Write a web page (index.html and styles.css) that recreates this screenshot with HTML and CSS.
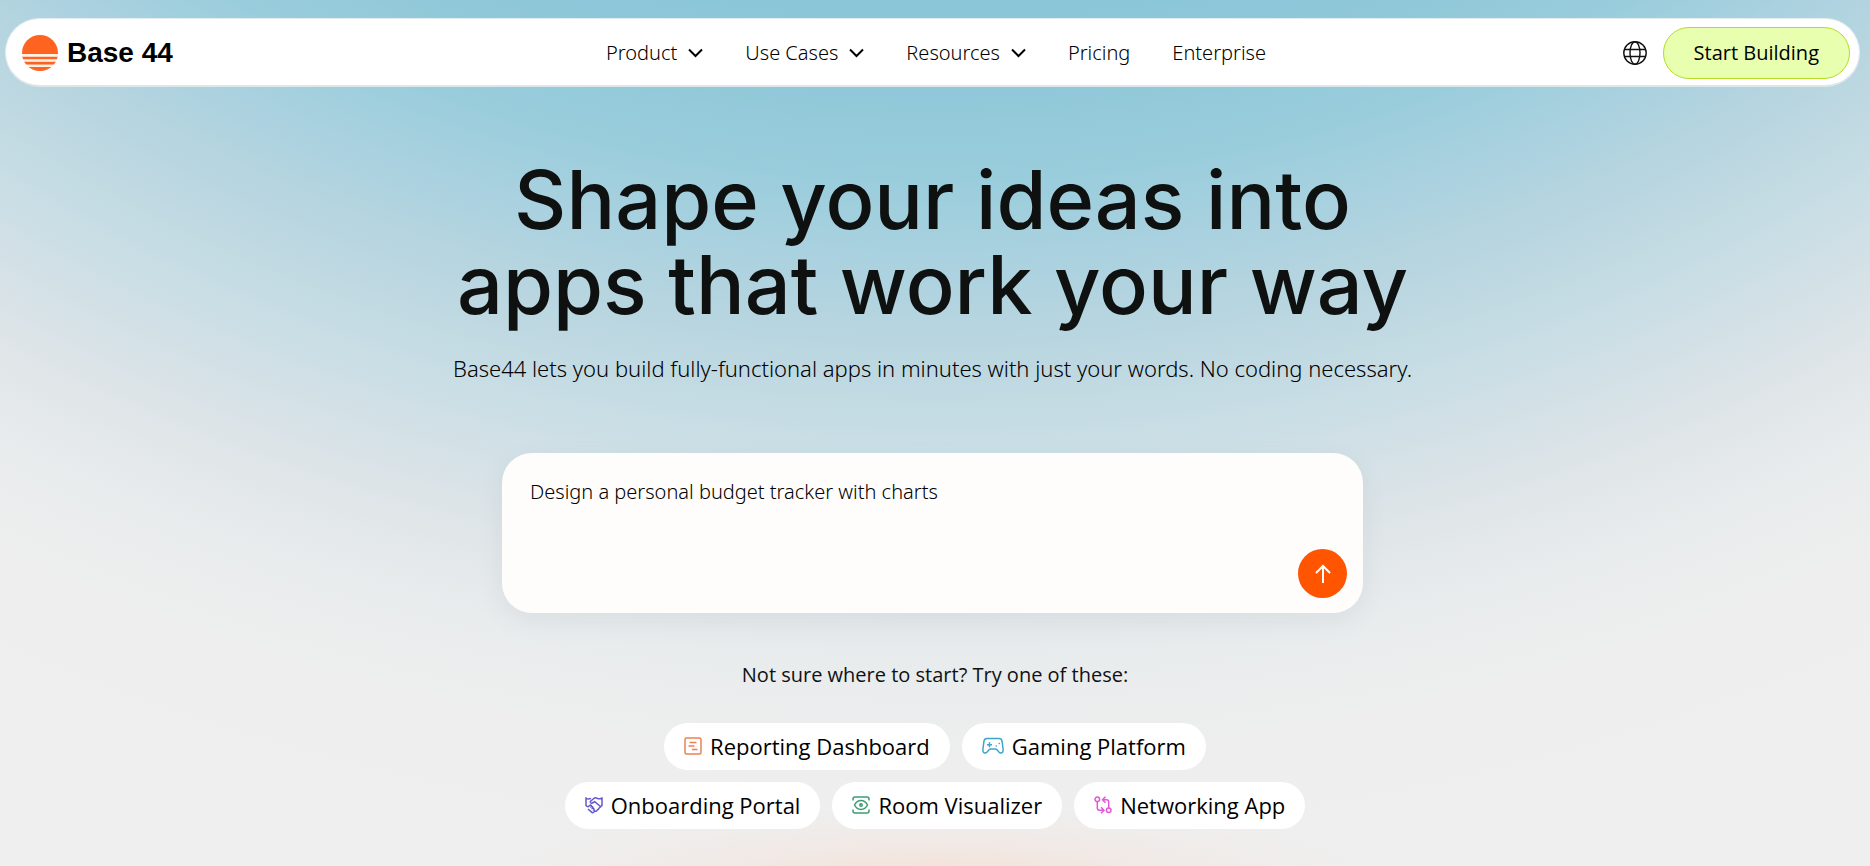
FILE: index.html
```html
<!DOCTYPE html>
<html lang="en">
<head>
<meta charset="utf-8">
<meta name="viewport" content="width=device-width, initial-scale=1">
<title>Base 44</title>
<link rel="stylesheet" href="styles.css">
</head>
<body>
<header class="navbar">
  <a class="brand" href="#">
    <svg class="brand-mark" viewBox="0 0 36 36" aria-hidden="true">
      <defs><clipPath id="sun"><circle cx="18" cy="18" r="18"/></clipPath></defs>
      <g clip-path="url(#sun)" fill="#ff6320">
        <path d="M0 0h36v19H0z"/>
        <path d="M0 21.5h36v3H0zM0 26.500h36v3.200H0zM0 32h36v4H0z"/>
        <path d="M0 19h36v2.500H0zM0 24.500h36v2H0zM0 29.700h36v2.300H0z" fill="#fff1e8"/>
      </g>
    </svg>
    <span>Base 44</span>
  </a>
  <nav class="links" aria-label="Main">
    <button class="link" type="button">Product <svg class="chevron" viewBox="0 0 15 10" aria-hidden="true"><path d="M1 1.500 7.500 8 14 1.500"/></svg></button>
    <button class="link" type="button">Use Cases <svg class="chevron" viewBox="0 0 15 10" aria-hidden="true"><path d="M1 1.500 7.500 8 14 1.500"/></svg></button>
    <button class="link" type="button">Resources <svg class="chevron" viewBox="0 0 15 10" aria-hidden="true"><path d="M1 1.500 7.500 8 14 1.500"/></svg></button>
    <a class="link" href="#">Pricing</a>
    <a class="link" href="#">Enterprise</a>
  </nav>
  <div class="actions">
    <button class="globe" type="button" aria-label="Language">
      <svg viewBox="0 0 24 24" aria-hidden="true"><circle cx="12" cy="12" r="11.200"/><ellipse cx="12" cy="12" rx="5" ry="11.200"/><path d="M1.800 8.500h20.400M1.800 15.500h20.400"/></svg>
    </button>
    <a class="cta" href="#">Start Building</a>
  </div>
</header>

<main>
  <section class="hero">
    <h1>Shape your ideas into<br>apps that work your way</h1>
    <p class="lead">Base44 lets you build fully-functional apps in minutes with just your words. No coding necessary.</p>
    <form class="prompt">
      <textarea class="prompt-text" aria-label="Describe your app" rows="2">Design a personal budget tracker with charts</textarea>
      <button class="send" type="button" aria-label="Send">
        <svg viewBox="0 0 18 20" aria-hidden="true"><path d="M9 19V2M2 9l7-7 7 7"/></svg>
      </button>
    </form>
  </section>

  <section class="suggestions">
    <p class="hint">Not sure where to start? Try one of these:</p>
    <div class="chips">
      <button class="chip" type="button">
        <svg class="icon orange" viewBox="0 0 18 18" aria-hidden="true"><rect x="1" y="1" width="16" height="16" rx="1.500"/><path d="M5.500 5.500h7M4.500 9h6M8 12.500h5.500"/></svg>
        Reporting Dashboard
      </button>
      <button class="chip" type="button">
        <svg class="icon wide blue" viewBox="0 0 22 18" aria-hidden="true"><path d="M5 1.500h12c1.800 0 2.800 1 3.100 2.800l1 8.200c.4 3.200-2.300 4.600-4.200 2.500L15 12.800c-.5-.5-1-.8-1.700-.8H8.700c-.7 0-1.200.3-1.700.8L5.100 15C3.200 17.100.5 15.700.9 12.500l1-8.200C2.200 2.500 3.200 1.500 5 1.500z"/><path d="M7.500 5.200v5M5 7.700h5"/><path d="M14.200 9h.1M17.200 6.500h.1" stroke-linecap="round"/></svg>
        Gaming Platform
      </button>
      <button class="chip" type="button">
        <svg class="icon violet" viewBox="0 0 18 18" aria-hidden="true"><path d="M1 1.200V9.500l2 1.500M17 1.200v8.300l-2 1.800M1 2.300c2 1 3.200.9 5 .1M17 2.300c-2.200.9-3.500.5-5-.1-1.300-.6-2.300-.5-3.200.3L5.600 5.300c-.8 1 .5 2.300 1.700 1.700L9.700 5.700l5.200 4.300c1 .9 0 2.300-1.200 1.600M13.500 11.800c.7 1-.2 2.200-1.500 1.500M12 13.500c.4 1-.4 2-1.600 1.500M3 11l1.800-1.600c1-.8 2 .2 1.500 1.300 1.200-.4 2 .6 1.300 1.600 1.100-.2 1.600.8 1.100 1.600 1 .1 1.300 1.200.5 1.900l-.8.700c-.5.400-1.100.3-1.500-.1L3 13"/></svg>
        Onboarding Portal
      </button>
      <button class="chip" type="button">
        <svg class="icon green" viewBox="0 0 18 18" aria-hidden="true"><path d="M1 4.500V3c0-1.200.8-2 2-2h12c1.200 0 2 .8 2 2v1.500M1 13.500V15c0 1.200.8 2 2 2h12c1.200 0 2-.8 2-2v-1.500"/><path d="M2.500 9c1.500-3 4-4.500 6.500-4.500S14 6 15.500 9c-1.500 3-4 4.500-6.500 4.500S4 12 2.500 9z"/><circle cx="9" cy="9" r="1.200"/></svg>
        Room Visualizer
      </button>
      <button class="chip" type="button">
        <svg class="icon pink" viewBox="0 0 18 18" aria-hidden="true"><circle cx="3.300" cy="3.300" r="2.300"/><circle cx="14.700" cy="14.200" r="2.300"/><path d="M3.300 5.600v6.400c0 1.500.7 2.200 2.200 2.200H9.500M7 11.200l3 3-3 3M14.700 11.900V6c0-1.500-.7-2.200-2.200-2.200H9M11.500.8l-3 3 3 3"/></svg>
        Networking App
      </button>
    </div>
  </section>
</main>
</body>
</html>
```
FILE: styles.css
```css
* {
  box-sizing: border-box;
}

body {
  margin: 0;
  min-height: 100vh;
  padding-top: 18px;
  font-family: "Open Sans", "Noto Sans", sans-serif;
  font-size: 20px;
  line-height: 28px;
  color: #111;
  background:
    radial-gradient(24% 9% at 50% 102%, #f6dfd3 0%, rgba(243, 228, 220, 0.5) 50%, rgba(239, 239, 239, 0) 100%),
    radial-gradient(112% 208% at 50% -106%,
      #8ac5d8 51%,
      #90c8d9 56%,
      #9acddc 61%,
      #a9d1df 65%,
      #b9d6e0 70%,
      #cadee5 76%,
      #dfe5e8 83%,
      #e9eced 88%,
      #eeeeee 94%,
      #efefef 100%);
}

button {
  border: 0;
  padding: 0;
  background: none;
  font: inherit;
  color: inherit;
  cursor: pointer;
}

a {
  color: inherit;
  text-decoration: none;
}

svg {
  display: block;
  fill: none;
  stroke: currentColor;
}

.navbar {
  display: grid;
  grid-template-columns: 1fr auto 1fr;
  align-items: center;
  min-height: 69px;
  margin: 0 10px 0 5px;
  padding: 1px 9px 0 16px;
  border: 1px solid #e3ecef;
  border-bottom: 2px solid #dde7ea;
  border-radius: 35px;
  background: #fff;
}

.brand {
  display: flex;
  align-items: center;
  gap: 9px;
  font-family: "Liberation Sans", Arial, sans-serif;
  font-size: 28px;
  font-weight: 700;
  color: #000;
}

.brand-mark {
  width: 36px;
  height: 36px;
  stroke: none;
}

.links {
  display: flex;
  gap: 42px;
  font-family: "Noto Sans", "Open Sans", sans-serif;
  font-weight: 300;
  color: #000;
}

.link {
  display: flex;
  align-items: center;
  gap: 11px;
}

.chevron {
  width: 15px;
  height: 10px;
  stroke: #000;
  stroke-width: 2;
}

.actions {
  display: flex;
  justify-content: flex-end;
  align-items: center;
  gap: 16px;
}

.globe svg {
  width: 24px;
  height: 24px;
  stroke-width: 1.4;
}

.cta {
  padding: 11px 30px;
  border: 1px solid #b5dc24;
  border-radius: 26px;
  background: #e8ffb0;
  color: #000;
}

.hero {
  display: flex;
  flex-direction: column;
  align-items: center;
  padding: 71px 5px 0 0;
}

h1 {
  margin: 0 0 24px;
  font-family: Inter, "Liberation Sans", sans-serif;
  font-size: 81px;
  font-weight: 500;
  line-height: 85px;
  text-align: center;
  color: #0f1010;
}

.lead {
  margin: 0 0 69px;
  font-family: "Noto Sans", "Open Sans", sans-serif;
  font-size: 22px;
  font-weight: 300;
  line-height: 32px;
  text-align: center;
  color: #000;
}

.prompt {
  display: flex;
  align-items: flex-end;
  width: 100%;
  max-width: 861px;
  min-height: 160px;
  padding: 25px 16px 15px 28px;
  border-radius: 30px;
  background: #fefdfb;
  box-shadow: 0 8px 24px rgba(90, 110, 130, 0.09);
}

.prompt-text {
  flex: 1;
  align-self: stretch;
  padding: 0;
  border: 0;
  outline: 0;
  resize: none;
  background: none;
  font: inherit;
  font-family: "Noto Sans", "Open Sans", sans-serif;
  font-weight: 300;
  color: #000;
}

.send {
  display: grid;
  place-items: center;
  width: 49px;
  height: 49px;
  border-radius: 50%;
  background: #ff5500;
  color: #fff;
}

.send svg {
  width: 18px;
  height: 20px;
  stroke-width: 2;
}

.suggestions {
  display: flex;
  flex-direction: column;
  align-items: center;
  gap: 34px;
  padding: 48px 0 36px;
}

.hint {
  margin: 0;
}

.chips {
  display: flex;
  flex-wrap: wrap;
  justify-content: center;
  gap: 12px;
  max-width: 780px;
}

.chip {
  display: flex;
  align-items: center;
  gap: 8px;
  min-height: 47px;
  padding: 0 20px 2px;
  border-radius: 24px;
  background: #fff;
  font-size: 22px;
  color: #000;
}

.icon {
  width: 18px;
  height: 18px;
  stroke-width: 1.5;
}

.wide {
  width: 22px;
}

.orange { color: #ee8052; }
.blue { color: #3fa5c8; }
.violet { color: #6458cc; }
.green { color: #3c9c74; }
.pink { color: #e458d8; }
```
